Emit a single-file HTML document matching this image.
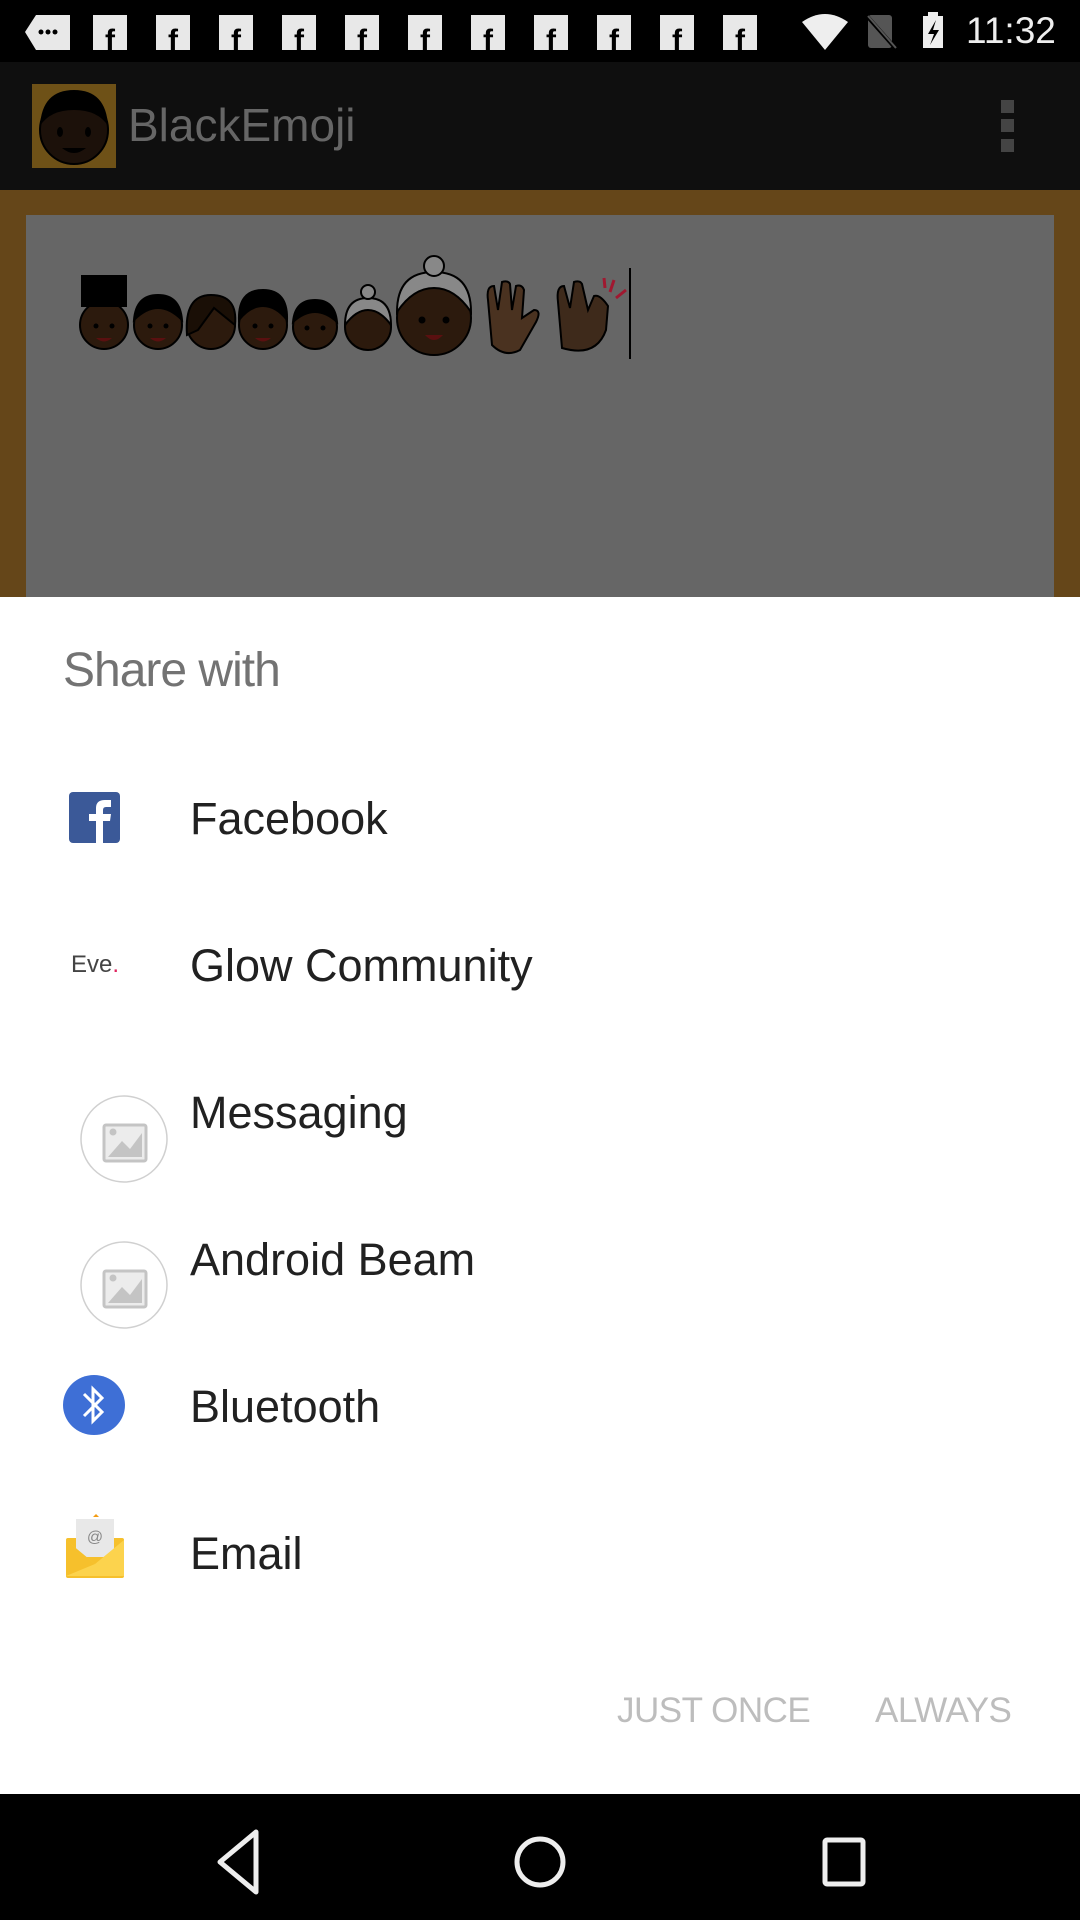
<!DOCTYPE html>
<html><head><meta charset="utf-8"><style>
*{margin:0;padding:0;box-sizing:border-box}
body{width:1080px;height:1920px;position:relative;overflow:hidden;background:#000;font-family:"Liberation Sans",sans-serif}
.abs{position:absolute}
.item{position:absolute;left:190px;font-size:45px;color:#212121;line-height:1}
</style></head><body>
<div class="abs" style="left:0;top:0;width:1080px;height:62px;background:#000"></div>
<svg class="abs" style="left:0;top:0" width="1080" height="62">
<path d="M36 15 H70 V50 H36 L25 32 Z" fill="#e8e8e8"/>
<circle cx="41" cy="32" r="2.5" fill="#000"/><circle cx="48" cy="32" r="2.5" fill="#000"/><circle cx="55" cy="32" r="2.5" fill="#000"/>
<g fill="#e8e8e8">
<rect x="93" y="15" width="34" height="35"/><rect x="156" y="15" width="34" height="35"/><rect x="219" y="15" width="34" height="35"/><rect x="282" y="15" width="34" height="35"/><rect x="345" y="15" width="34" height="35"/><rect x="408" y="15" width="34" height="35"/><rect x="471" y="15" width="34" height="35"/><rect x="534" y="15" width="34" height="35"/><rect x="597" y="15" width="34" height="35"/><rect x="660" y="15" width="34" height="35"/><rect x="723" y="15" width="34" height="35"/>
</g>
<g font-family="Liberation Sans" font-weight="bold" font-size="30" fill="#000">
<text x="105" y="50">f</text><text x="168" y="50">f</text><text x="231" y="50">f</text><text x="294" y="50">f</text><text x="357" y="50">f</text><text x="420" y="50">f</text><text x="483" y="50">f</text><text x="546" y="50">f</text><text x="609" y="50">f</text><text x="672" y="50">f</text><text x="735" y="50">f</text>
</g>
<path d="M802 22 Q825 6 848 22 L825 50 Z" fill="#eee"/>
<rect x="868" y="15" width="24" height="33" rx="3" fill="#555"/>
<line x1="866" y1="15" x2="897" y2="50" stroke="#000" stroke-width="4"/><line x1="868" y1="16" x2="896" y2="48" stroke="#555" stroke-width="2"/>
<rect x="923" y="16" width="20" height="32" fill="#eee"/><rect x="928" y="12" width="10" height="5" fill="#eee"/>
<path d="M936 20 L928 34 H934 L930 45 L939 30 H933 Z" fill="#000"/>
</svg>
<div class="abs" style="left:966px;top:12px;font-size:37px;color:#eee;line-height:1">11:32</div>
<div class="abs" style="left:0;top:62px;width:1080px;height:128px;background:#0f0f0f"></div>
<div class="abs" style="left:32px;top:84px;width:84px;height:84px;background:#6e5117"></div>
<svg class="abs" style="left:32px;top:84px" width="84" height="84">
<circle cx="42" cy="46" r="34" fill="#1c110a" stroke="#000" stroke-width="2"/>
<path d="M8 42 Q10 6 42 6 Q74 6 76 42 Q66 26 42 26 Q18 26 8 42Z" fill="#000"/>
<ellipse cx="28" cy="48" rx="3" ry="5" fill="#000"/><ellipse cx="56" cy="48" rx="3" ry="5" fill="#000"/>
<path d="M30 64 Q42 74 54 64 Z" fill="#000"/>
</svg>
<div class="abs" style="left:128px;top:102px;font-size:46px;color:#666;line-height:1">BlackEmoji</div>
<div class="abs" style="left:1001px;top:100px;width:13px;height:13px;background:#444"></div>
<div class="abs" style="left:1001px;top:119px;width:13px;height:13px;background:#444"></div>
<div class="abs" style="left:1001px;top:139px;width:13px;height:13px;background:#444"></div>
<div class="abs" style="left:0;top:190px;width:1080px;height:407px;background:#654619"></div>
<div class="abs" style="left:26px;top:215px;width:1028px;height:382px;background:#666"></div>
<svg class="abs" style="left:0;top:250px" width="700" height="120">
<g stroke="#000" stroke-width="2">
<circle cx="104" cy="75" r="24" fill="#2c1a0d"/><rect x="82" y="26" width="44" height="30" fill="#000"/>
<circle cx="158" cy="75" r="24" fill="#2c1a0d"/><path d="M134 70 Q136 45 158 45 Q180 45 182 70 Q170 58 158 58 Q146 58 134 70Z" fill="#000"/>
<circle cx="211" cy="75" r="24" fill="#2c1a0d"/><path d="M187 85 Q184 45 211 45 Q238 45 235 75 L214 58 L198 80Z" fill="#1a0f06"/>
<circle cx="263" cy="75" r="24" fill="#2c1a0d"/><path d="M239 70 Q238 40 263 40 Q288 40 287 70 Q276 56 263 56 Q250 56 239 70Z" fill="#000"/>
<circle cx="315" cy="77" r="22" fill="#2c1a0d"/><path d="M293 72 Q295 50 315 50 Q335 50 337 72 Q326 62 315 62 Q304 62 293 72Z" fill="#000"/>
<circle cx="368" cy="77" r="23" fill="#2c1a0d"/><path d="M345 75 Q345 48 368 48 Q391 48 391 75 Q380 60 368 60 Q356 60 345 75Z" fill="#888"/><circle cx="368" cy="42" r="7" fill="#888"/>
<circle cx="434" cy="68" r="37" fill="#2c1a0d"/><path d="M397 62 Q397 22 434 22 Q471 22 471 62 Q455 38 434 38 Q413 38 397 62Z" fill="#888"/><circle cx="434" cy="16" r="10" fill="#888"/>
<path d="M492 95 L488 50 Q486 36 494 36 L498 60 L502 32 Q508 30 510 34 L512 60 L516 36 Q522 34 524 40 L522 68 L534 60 Q542 60 536 72 L520 100 Q505 108 492 95Z" fill="#4a3220"/>
<path d="M562 98 L558 52 Q556 36 564 36 L570 58 L574 32 Q580 30 582 34 L588 60 L594 46 Q600 44 608 56 L606 80 Q596 108 562 98Z" fill="#3e2a1b"/>
</g>
<g fill="#000"><circle cx="96" cy="76" r="2.5"/><circle cx="112" cy="76" r="2.5"/><circle cx="150" cy="76" r="2.5"/><circle cx="166" cy="76" r="2.5"/><circle cx="255" cy="76" r="2.5"/><circle cx="271" cy="76" r="2.5"/><circle cx="307" cy="78" r="2.5"/><circle cx="323" cy="78" r="2.5"/><circle cx="422" cy="70" r="3.5"/><circle cx="446" cy="70" r="3.5"/></g>
<g fill="#5a1010"><path d="M96 88 Q104 95 112 88Z"/><path d="M150 88 Q158 95 166 88Z"/><path d="M255 88 Q263 95 271 88Z"/><path d="M425 85 Q434 95 443 85Z"/></g>
<path d="M610 42 L614 30 M616 48 L626 40 M605 38 L604 28" stroke="#a01830" stroke-width="3"/>
<rect x="629" y="18" width="2" height="91" fill="#000"/>
</svg>
<div class="abs" style="left:0;top:597px;width:1080px;height:1197px;background:#fff"></div>
<div class="abs" style="left:63px;top:647px;font-size:48px;color:#737373;line-height:1;letter-spacing:-1px">Share with</div>
<svg class="abs" style="left:69px;top:792px" width="52" height="52">
<rect width="51" height="51" rx="4" fill="#3b5998"/>
<path d="M27 51 V29 H20 V22 H27 V16 Q27 8 36 8 H42 V15 H37 Q34 15 34 18 V22 H42 L41 29 H34 V51Z" fill="#fff"/>
</svg>
<div class="item" style="top:796px">Facebook</div>
<div class="abs" style="left:71px;top:953px;font-size:24px;color:#444;line-height:1">Eve<span style="color:#e0245e">.</span></div>
<div class="item" style="top:943px">Glow Community</div>
<svg class="abs" style="left:80px;top:1095px" width="90" height="90">
<circle cx="44" cy="44" r="43" fill="#fff" stroke="#d0d0d0" stroke-width="1.5"/>
<rect x="24" y="30" width="42" height="36" rx="2" fill="#ececec" stroke="#c4c4c4" stroke-width="3"/>
<path d="M28 62 L42 46 L50 54 L62 38 V62Z" fill="#c4c4c4"/><circle cx="33" cy="37" r="3.5" fill="#c4c4c4"/>
</svg>
<div class="item" style="top:1090px">Messaging</div>
<svg class="abs" style="left:80px;top:1241px" width="90" height="90">
<circle cx="44" cy="44" r="43" fill="#fff" stroke="#d0d0d0" stroke-width="1.5"/>
<rect x="24" y="30" width="42" height="36" rx="2" fill="#ececec" stroke="#c4c4c4" stroke-width="3"/>
<path d="M28 62 L42 46 L50 54 L62 38 V62Z" fill="#c4c4c4"/><circle cx="33" cy="37" r="3.5" fill="#c4c4c4"/>
</svg>
<div class="item" style="top:1237px">Android Beam</div>
<svg class="abs" style="left:62px;top:1374px" width="64" height="64">
<ellipse cx="32" cy="31" rx="31" ry="30" fill="#3e6fd6"/>
<path d="M22 20 L40 38 L31 47 V15 L40 24 L22 42" fill="none" stroke="#fff" stroke-width="3"/>
</svg>
<div class="item" style="top:1384px">Bluetooth</div>
<svg class="abs" style="left:64px;top:1514px" width="62" height="66">
<path d="M29 3 L32 0 L35 3Z" fill="#f39c12"/>
<rect x="2" y="24" width="58" height="40" rx="2" fill="#f6c02c"/>
<rect x="12" y="5" width="38" height="38" fill="#e8e8e8"/>
<text x="31" y="28" font-family="Liberation Sans" font-size="16" fill="#888" text-anchor="middle">@</text>
<path d="M2 26 L31 50 L60 26 V62 H2Z" fill="#fcd34d"/>
<path d="M2 26 L31 50 L2 62Z" fill="#f6c02c"/>
</svg>
<div class="item" style="top:1531px">Email</div>
<div class="abs" style="left:617px;top:1693px;font-size:35px;color:#bdbdbd;line-height:1;letter-spacing:-0.5px">JUST ONCE</div>
<div class="abs" style="left:875px;top:1693px;font-size:35px;color:#bdbdbd;line-height:1;letter-spacing:-0.5px">ALWAYS</div>
<svg class="abs" style="left:0;top:1794px" width="1080" height="126">
<path d="M256 38 L220 68 L256 98 Z" fill="none" stroke="#eee" stroke-width="5" stroke-linejoin="round"/>
<circle cx="540" cy="68" r="23" fill="none" stroke="#eee" stroke-width="5"/>
<rect x="825" y="46" width="38" height="44" rx="2" fill="none" stroke="#eee" stroke-width="5"/>
</svg>
</body></html>
